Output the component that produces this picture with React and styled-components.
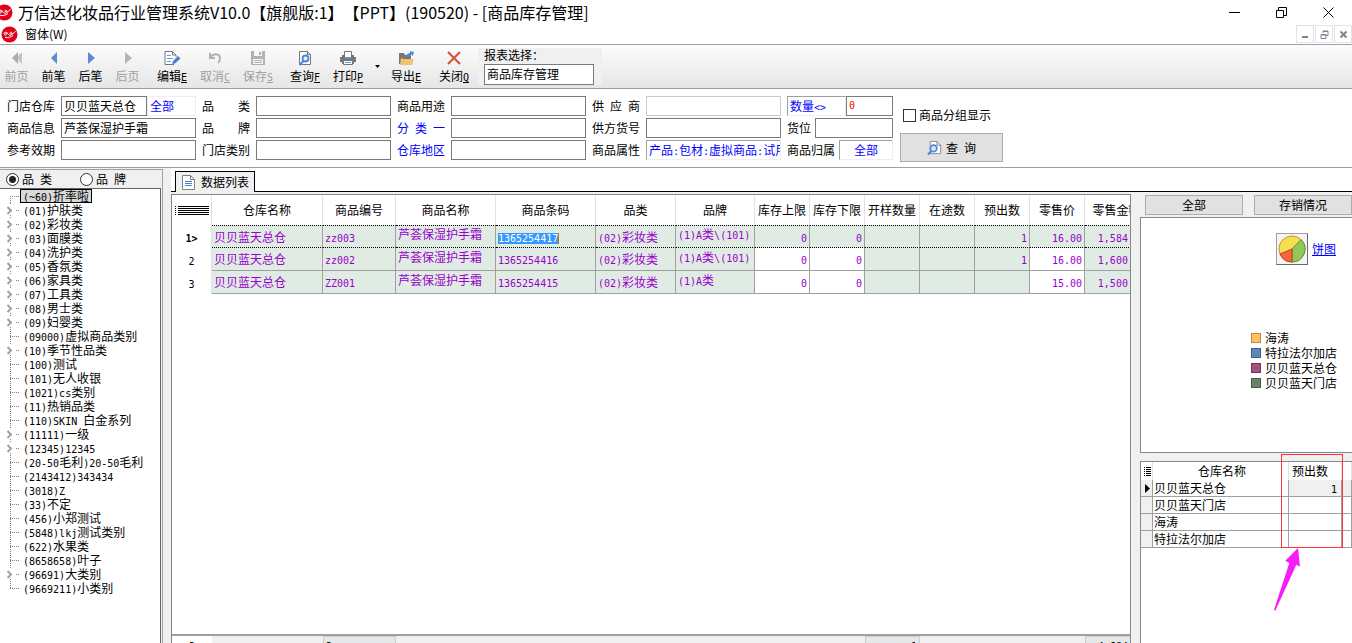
import React from 'react';
import styled, { createGlobalStyle, css } from 'styled-components';

const treeItems = [
  { code: '(~60)', name: '折率啦', selected: true },
  { code: '(01)', name: '护肤类', open: true },
  { code: '(02)', name: '彩妆类', open: true },
  { code: '(03)', name: '面膜类', open: true },
  { code: '(04)', name: '洗护类', open: true },
  { code: '(05)', name: '香氛类', open: true },
  { code: '(06)', name: '家具类', open: true },
  { code: '(07)', name: '工具类', open: true },
  { code: '(08)', name: '男士类', open: true },
  { code: '(09)', name: '妇婴类', open: true },
  { code: '(09000)', name: '虚拟商品类别' },
  { code: '(10)', name: '季节性品类', open: true },
  { code: '(100)', name: '测试' },
  { code: '(101)', name: '无人收银' },
  { code: '(1021)', name: 'cs类别' },
  { code: '(11)', name: '热销品类' },
  { code: '(110)', name: 'SKIN 白金系列' },
  { code: '(11111)', name: '一级', open: true },
  { code: '(12345)', name: '12345', open: true },
  { code: '(20-50毛利)', name: '20-50毛利' },
  { code: '(2143412)', name: '343434' },
  { code: '(3018)', name: 'Z' },
  { code: '(33)', name: '不定' },
  { code: '(456)', name: '小郑测试' },
  { code: '(5848)', name: 'lkj测试类别' },
  { code: '(622)', name: '水果类' },
  { code: '(8658658)', name: '叶子' },
  { code: '(96691)', name: '大类别', open: true },
  { code: '(9669211)', name: '小类别' },
];

const columns = [
  { key: 'store', title: '仓库名称', width: 111 },
  { key: 'no', title: '商品编号', width: 73 },
  { key: 'name', title: '商品名称', width: 100, top: true },
  { key: 'barcode', title: '商品条码', width: 100 },
  { key: 'type', title: '品类', width: 80 },
  { key: 'brand', title: '品牌', width: 79, top: true },
  { key: 'max', title: '库存上限', width: 55, num: true, editable: true },
  { key: 'min', title: '库存下限', width: 55, num: true, editable: true },
  { key: 'sample', title: '开样数量', width: 55, num: true },
  { key: 'transit', title: '在途数', width: 55, num: true },
  { key: 'out', title: '预出数', width: 55, num: true },
  { key: 'price', title: '零售价', width: 55, num: true, editable: true },
  { key: 'amount', title: '零售金额', width: 64, num: true },
];

const rows = [
  { store: '贝贝蓝天总仓', no: 'zz003', name: '芦荟保湿护手霜', barcode: '1365254417', type: '(02)彩妆类', brand: '(1)A类\\(101)', max: '0', min: '0', out: '1', price: '16.00', amount: '1,584.00' },
  { store: '贝贝蓝天总仓', no: 'zz002', name: '芦荟保湿护手霜', barcode: '1365254416', type: '(02)彩妆类', brand: '(1)A类\\(101)', max: '0', min: '0', out: '1', price: '16.00', amount: '1,600.00' },
  { store: '贝贝蓝天总仓', no: 'ZZ001', name: '芦荟保湿护手霜', barcode: '1365254415', type: '(02)彩妆类', brand: '(1)A类', max: '0', min: '0', price: '15.00', amount: '1,500.00' },
];

const totals = { no: '3', sample: '1', amount: '4,684.00' };

const legend = [
  { name: '海涛', color: '#ffc061', line: '#c08a3a' },
  { name: '特拉法尔加店', color: '#5f86b8', line: '#3a5f94' },
  { name: '贝贝蓝天总仓', color: '#a4557c', line: '#7b3459' },
  { name: '贝贝蓝天门店', color: '#6c7f68', line: '#4b5c48' },
];

const stores = [
  { name: '贝贝蓝天总仓', count: '1' },
  { name: '贝贝蓝天门店', count: '' },
  { name: '海涛', count: '' },
  { name: '特拉法尔加店', count: '' },
];

// half-width characters take exactly half of a Chinese one
const Mixed = ({ children }) =>
  String(children)
    .split(/([\x20-\x7e]+)/)
    .filter(Boolean)
    .map((part, i) => (/^[\x20-\x7e]/.test(part) ? <Half key={i}>{part}</Half> : part));

const Logo = () => (
  <svg width='17' height='17' viewBox='0 0 17 17' aria-hidden='true'>
    <circle cx='8.5' cy='8.5' r='8' fill='#e0001b' />
    <path d='M2.500 7.500C4 5.500 6 6 6 7.500S3.500 9.800 3.500 8.300s3-2 4 0 3.500 1.200 3.500-.8-2.500-1.500-2 0 4 .3 5.500-2.300M4 11.300c3 .6 6 0 8-1.800' stroke='#fff' strokeWidth='1' fill='none' />
  </svg>
);

const icons = {
  first: (
    <g>
      <path d='M13 2v12L7 8z' fill='#c4c4c4' />
      <path d='M9 2v12L3 8z' fill='#adadad' />
    </g>
  ),
  prev: <path d='M11 2v12L5 8z' fill='#5b8bd8' />,
  next: <path d='M5 2v12l7-6z' fill='#5b8bd8' />,
  last: <path d='M5 2v12l7-6z' fill='#b4b4b4' />,
  edit: (
    <g>
      <path d='M10 14.500H1V1.500h7.500L12 5v2' stroke='#777' fill='#fff' />
      <path d='M8.500 1.500V5H12' stroke='#777' fill='none' />
      <path d='M3 5.500h4M3 8.500h6M3 11.500h4' stroke='#59a0e8' />
      <path d='m8 14 1-3 5-5 2.500 2.500-5.500 5z' fill='#4a7fd0' />
    </g>
  ),
  undo: <path d='M3 3v5h5M3.500 7.500C6 3 13 3 13 8.500c0 2-1 3.500-2 4.500' stroke='#b2b2b2' strokeWidth='2' fill='none' />,
  save: (
    <g fill='#b2b2b2'>
      <path d='M1 1h14v14H1z' />
      <path d='M4 1h8v5H4zM3 9h10v5H3z' fill='#f6f6f6' />
      <path d='M9 2h2v3H9zM4 10h8v1H4zM4 12h8v1H4z' />
    </g>
  ),
  search: (
    <g>
      <path d='M2.500 14.500v-13h8l3 3v10z' stroke='#777' fill='#fff' />
      <path d='M10.500 1.500v3h3' stroke='#777' fill='none' />
      <circle cx='8.500' cy='8.500' r='3' stroke='#4a86d8' strokeWidth='1.800' fill='#e4f0ff' />
      <path d='m6.500 11-4 4' stroke='#4a86d8' strokeWidth='2.200' />
    </g>
  ),
  query: (
    <g>
      <path d='M3.500 14.500v-13h7l4 4v9z' stroke='#888' fill='#fff' />
      <path d='M10.500 1.500v4h4' stroke='#888' fill='none' />
      <circle cx='7' cy='9' r='3.500' stroke='#4a86d8' strokeWidth='1.800' fill='#d6e8ff' />
      <path d='m4.500 12-3.500 3.500' stroke='#4a86d8' strokeWidth='2.200' />
    </g>
  ),
  print: (
    <g>
      <path d='M4.500 7V1.500h7V7' stroke='#777' fill='#fff' />
      <path d='M0 7h2V5h2v2h8V5h2v2h2v5h-2v2H2v-2H0z' fill='#777' />
      <path d='M3.500 10.500h9v4h-9z' stroke='#777' fill='#fff' />
      <path d='M5 7h6v1.500H5zM5 12h6v1H5z' fill='#59a0e8' />
    </g>
  ),
  exportFile: (
    <g>
      <path d='M1 3h5l1 2h6v9H1z' fill='#777' />
      <path d='m3 8-1 7h12l2-6H5z' fill='#edc374' />
      <path d='M8 7c0-3 2-4 4-4V1l4 1-1 4-1.500-1.200C12 5 11 6 8 7z' fill='#4a90e0' />
    </g>
  ),
  close: <path d='m2 2 12 12M14 2 2 14' stroke='#d0583c' strokeWidth='2.200' />,
};

const Icon = ({ name, size = 16 }) => (
  <svg width={size} height={size} viewBox='0 0 16 16' fill='none' aria-hidden='true'>
    {icons[name]}
  </svg>
);

const PageIcon = () => (
  <svg width='13' height='15' viewBox='0 0 13 15' fill='none' aria-hidden='true'>
    <path d='M.5.5h8l4 4v10H.5z' fill='#fff' stroke='#808080' />
    <path d='M8.500.5v4h4' stroke='#808080' />
    <path d='M3 6.500h7M3 8.500h7M3 10.500h7' stroke='#4a86d8' />
  </svg>
);

const PieIcon = () => (
  <svg width='28' height='28' viewBox='0 0 28 28' aria-hidden='true'>
    <circle cx='14' cy='14' r='13' fill='#f5df51' stroke='#c9952b' />
    <path d='M14 14 23 4.600A13 13 0 0 1 14 27z' fill='#92c658' stroke='#5c9636' />
    <path d='M14 14v13A13 13 0 0 1 2 19z' fill='#f0693a' stroke='#cb3b1c' />
  </svg>
);

const Guide = ({ open, first, last }) => (
  <svg width='20' height='14' viewBox='0 0 20 14' fill='none' aria-hidden='true'>
    <path d={first ? 'M10.500 7v7' : last ? 'M10.500 0v8' : 'M10.500 0v14'} stroke='#808080' strokeDasharray='1 1' />
    <path d='M10 7.500h10' stroke='#808080' strokeDasharray='1 1' />
    {open && (
      <g>
        <path d='M6 2h10v10H6z' fill='#fff' />
        <path d='m7.500 4 3.500 3.500L7.500 11' stroke='#a0a0a0' strokeWidth='2' />
      </g>
    )}
  </svg>
);

const Tool = ({ icon, text, hotkey, disabled }) => (
  <ToolButton disabled={disabled} $wide={hotkey}>
    <Icon name={icon} />
    <span>
      {text}
      {hotkey && <Hotkey>{hotkey}</Hotkey>}
    </span>
  </ToolButton>
);

const Field = ({ id, label, link, light, value = '' }) => (
  <>
    <FieldLabel htmlFor={id} $link={link}>{label}</FieldLabel>
    <TextBox id={id} defaultValue={value} $light={light} />
  </>
);

const App = () => {
  return (
    <Window>
      <GlobalStyle />
      <TitleBar>
        <TitleLogo><Logo /></TitleLogo>
        <Title>万信达化妆品行业管理系统V10.0【旗舰版:1】【PPT】(190520) - [商品库存管理]</Title>
        <WindowButton aria-label='最小化'>
          <svg width='11' height='11'><path d='M0 5.500h11' stroke='#000' /></svg>
        </WindowButton>
        <WindowButton aria-label='还原'>
          <svg width='11' height='11' fill='none' stroke='#000'><path d='M.5 3.500h7v7h-7zM2.500 3V.5h8v8H8' /></svg>
        </WindowButton>
        <WindowButton aria-label='关闭'>
          <svg width='11' height='11' stroke='#000'><path d='m.5.5 10 10M10.500.5l-10 10' /></svg>
        </WindowButton>
      </TitleBar>
      <MenuBar>
        <Logo />
        <MenuItem>窗体(W)</MenuItem>
        <ChildButton aria-label='最小化窗体'>
          <svg width='9' height='9'><path d='M1 7h6' stroke='#748596' strokeWidth='2' /></svg>
        </ChildButton>
        <ChildButton aria-label='还原窗体'>
          <svg width='9' height='9' fill='none' stroke='#748596'><path d='M1 4.500h5v4H1zM1 5h5M3 3V1h5v4.500H6M3 1.500h5' /></svg>
        </ChildButton>
        <ChildButton aria-label='关闭窗体'>
          <svg width='9' height='9' stroke='#748596' strokeWidth='2'><path d='m1.500 1.500 6 6M7.500 1.500l-6 6' /></svg>
        </ChildButton>
      </MenuBar>

      <Toolbar>
        <ToolGroup $gap={12}>
          <Tool icon='first' text='前页' disabled />
          <Tool icon='prev' text='前笔' />
          <Tool icon='next' text='后笔' />
          <Tool icon='last' text='后页' disabled />
        </ToolGroup>
        <ToolGroup $gap={13}>
          <Tool icon='edit' text='编辑' hotkey='E' />
          <Tool icon='undo' text='取消' hotkey='C' disabled />
          <Tool icon='save' text='保存' hotkey='S' disabled />
        </ToolGroup>
        <PrintGroup>
          <Tool icon='search' text='查询' hotkey='F' />
          <Tool icon='print' text='打印' hotkey='P' />
        </PrintGroup>
        <DropButton aria-label='打印选项'>
          <svg width='5' height='3'><path d='M0 0h5L2.500 3z' /></svg>
        </DropButton>
        <ToolGroup $gap={18}>
          <Tool icon='exportFile' text='导出' hotkey='E' />
          <Tool icon='close' text='关闭' hotkey='Q' />
        </ToolGroup>
        <Report>
          <label htmlFor='report'>报表选择：</label>
          <TextBox id='report' defaultValue='商品库存管理' />
        </Report>
      </Toolbar>

      <Filters>
        <FilterGrid>
          <FieldLabel htmlFor='store'>门店仓库</FieldLabel>
          <Pair>
            <TextBox id='store' defaultValue='贝贝蓝天总仓' />
            <StoreAll>全部</StoreAll>
          </Pair>
          <Field id='type' label='品 类' />
          <Field id='usage' label='商品用途' />
          <Field id='supplier' label='供 应 商' light />
          <Pair>
            <QtyPick>数量<Half>&lt;&gt;</Half></QtyPick>
            <RedBox aria-label='数量' defaultValue='0' />
          </Pair>

          <Field id='info' label='商品信息' value='芦荟保湿护手霜' />
          <Field id='brand' label='品 牌' />
          <Field id='class1' label='分 类 一' link />
          <Field id='supplierNo' label='供方货号' />
          <Pair $gap={4}>
            <label htmlFor='slot'>货位</label>
            <TextBox id='slot' />
          </Pair>

          <Field id='expiry' label='参考效期' />
          <Field id='storeType' label='门店类别' />
          <Field id='area' label='仓库地区' link />
          <FieldLabel as='span'>商品属性</FieldLabel>
          <Pick><Mixed>产品:包材:虚拟商品:试用</Mixed></Pick>
          <Pair $gap={4}>
            <span>商品归属</span>
            <OwnerPick>全部</OwnerPick>
          </Pair>
        </FilterGrid>
        <FilterActions>
          <CheckLabel>
            <CheckBox type='checkbox' />
            商品分组显示
          </CheckLabel>
          <QueryButton>
            <Icon name='query' size={15} />
            <Spread>查 询</Spread>
          </QueryButton>
        </FilterActions>
      </Filters>

      <Workspace>
        <Sidebar>
          <RadioRow>
            <RadioLabel><Radio type='radio' name='group' defaultChecked /><Spread>品 类</Spread></RadioLabel>
            <RadioLabel><Radio type='radio' name='group' /><Spread>品 牌</Spread></RadioLabel>
          </RadioRow>
          <Tree>
            {treeItems.map((item, i) => (
              <TreeItem key={item.code}>
                <Guide open={item.open} first={i === 0} last={i === treeItems.length - 1} />
                <TreeText $selected={item.selected}><Mixed>{item.code + item.name}</Mixed></TreeText>
              </TreeItem>
            ))}
          </Tree>
        </Sidebar>

        <Content>
          <TabStrip>
            <Tab><PageIcon />数据列表</Tab>
          </TabStrip>
          <Panels>
            <GridPanel>
              <GridBody>
                <StockTable>
                  <colgroup>
                    <col width='40' />
                    {columns.map((col) => <col key={col.key} width={col.width} />)}
                  </colgroup>
                  <thead>
                    <tr>
                      <Th>
                        <svg width='34' height='9' aria-hidden='true'>
                          <path d='M0 .5h1M3 .5h31M0 2.500h1M3 2.500h31M0 4.500h1M3 4.500h31M0 6.500h1M3 6.500h31M0 8.500h1M3 8.500h31' stroke='#000' />
                        </svg>
                      </Th>
                      {columns.map((col) => <Th key={col.key}>{col.title}</Th>)}
                    </tr>
                  </thead>
                  <tbody>
                    {rows.map((row, i) => (
                      <tr key={row.no}>
                        <RowNo $current={i === 0}><Half>{i === 0 ? '1>' : i + 1}</Half></RowNo>
                        {columns.map((col) => (
                          <Td key={col.key} $num={col.num} $top={col.top} $current={i === 0} $plain={col.editable && i > 0}>
                            {i === 0 && col.key === 'barcode'
                              ? <Selected>{row.barcode}</Selected>
                              : <Mixed>{row[col.key] || ''}</Mixed>}
                          </Td>
                        ))}
                      </tr>
                    ))}
                  </tbody>
                </StockTable>
              </GridBody>
              <GridFooter>
                <FootCell $width={40} $count><Half>3</Half></FootCell>
                {columns.map((col) => (
                  <FootCell key={col.key} $width={col.width} $num={col.num} $filled={totals[col.key]}>
                    <Half>{totals[col.key]}</Half>
                  </FootCell>
                ))}
              </GridFooter>
            </GridPanel>

            <SidePanel>
              <SideButtons>
                <SideButton>全部</SideButton>
                <SideButton>存销情况</SideButton>
              </SideButtons>
              <ChartBox>
                <PieRow>
                  <PieButton aria-label='饼图'><PieIcon /></PieButton>
                  <a href='#pie'>饼图</a>
                </PieRow>
                <Legend>
                  {legend.map((item) => (
                    <LegendItem key={item.name}>
                      <Swatch $color={item.color} $line={item.line} />
                      {item.name}
                    </LegendItem>
                  ))}
                </Legend>
              </ChartBox>
              <StorePanel>
                <StoreTable>
                  <colgroup>
                    <col width='12' />
                    <col width='136' />
                    <col width='53' />
                    <col />
                  </colgroup>
                  <thead>
                    <tr>
                      <StoreTh>
                        <svg width='7' height='9' aria-hidden='true'>
                          <path d='M0 .5h1M2 .5h5M0 2.500h1M2 2.500h5M0 4.500h1M2 4.500h5M0 6.500h1M2 6.500h5M0 8.500h1M2 8.500h5' stroke='#000' />
                        </svg>
                      </StoreTh>
                      <StoreTh>仓库名称</StoreTh>
                      <StoreTh $left>预出数</StoreTh>
                      <StoreTh />
                    </tr>
                  </thead>
                  <tbody>
                    {stores.map((store, i) => (
                      <tr key={store.name}>
                        <StoreTd $gray $mark>
                          {i === 0 && <svg width='6' height='9' aria-hidden='true'><path d='M0 0v9l5-4.500z' /></svg>}
                        </StoreTd>
                        <StoreTd>{store.name}</StoreTd>
                        <StoreTd $num $gray={i === 0}><Half>{store.count}</Half></StoreTd>
                        <StoreTd $gray={i === 0} />
                      </tr>
                    ))}
                  </tbody>
                </StoreTable>
                <Highlight />
                <Arrow width='28' height='65' viewBox='0 0 28 65' aria-hidden='true'>
                  <path d='M25 1 27 19.700l-3.700-2L2.300 63.700 1 63l15.300-47-4-2.300z' fill='#f81cf8' />
                </Arrow>
              </StorePanel>
            </SidePanel>
          </Panels>
        </Content>
      </Workspace>
    </Window>
  );
};

export default App;

const GlobalStyle = createGlobalStyle`
  * {
    box-sizing: border-box;
  }
  body {
    margin: 0;
    background: #fff;
    color: #000;
    font-family: "Noto Sans CJK SC", sans-serif;
    font-size: 12px;
    line-height: 14px;
  }
  button, input {
    font: inherit;
    color: inherit;
    margin: 0;
    padding: 0;
    border-radius: 0;
  }
  button {
    border: 0;
    background: none;
  }
  svg {
    display: block;
    flex: none;
  }
  a {
    color: #0000ff;
  }
`;

const Half = styled.span`
  font-family: "DejaVu Sans Mono", monospace;
  font-size: 10px;
  line-height: 10px;
  white-space: pre;
`;

const Spread = styled.span`
  width: 30px;
  text-align-last: justify;
`;

const Window = styled.div`
  display: flex;
  flex-direction: column;
  height: 100vh;
  overflow: hidden;
`;

const TitleBar = styled.header`
  display: flex;
  align-items: center;
  flex: none;
  height: 24px;
`;

const TitleLogo = styled.span`
  width: 18px;
  display: flex;
  justify-content: flex-end;
  padding-right: 5px;
`;

const Title = styled.h1`
  flex: 1;
  margin: 0;
  font-size: 16px;
  line-height: 24px;
  font-weight: 400;
  text-spacing-trim: space-all;
  white-space: nowrap;
`;

const WindowButton = styled.button`
  display: flex;
  justify-content: center;
  width: 47px;
`;

const MenuBar = styled.nav`
  display: flex;
  align-items: center;
  gap: 1px;
  flex: none;
  height: 21px;
  padding-left: 1px;
  border-bottom: 1px solid #a0a0a0;
`;

const MenuItem = styled.button`
  margin-left: 6px;
  margin-right: auto;
`;

const ChildButton = styled.button`
  display: flex;
  align-items: center;
  justify-content: center;
  width: 18px;
  height: 18px;
  border: 1px solid #e3e3e3;
`;

const Toolbar = styled.div`
  display: flex;
  flex: none;
  height: 44px;
  padding: 3px 4px;
  border-bottom: 1px solid #a0a0a0;
  background: linear-gradient(#fcfcfc, #e6e6e6);
`;

const ToolGroup = styled.div`
  display: flex;
  gap: ${({ $gap }) => $gap}px;
  margin-right: 17px;

  &:nth-last-child(2) {
    margin-right: 9px;
  }
`;

const PrintGroup = styled.div`
  display: flex;
  gap: 13px;
`;

const ToolButton = styled.button`
  display: flex;
  flex-direction: column;
  align-items: center;
  gap: 3px;
  width: ${({ $wide }) => ($wide ? 30 : 25)}px;
  padding-top: 2px;
  white-space: nowrap;

  &:disabled {
    color: #a0a0a0;
  }
`;

const Hotkey = styled(Half)`
  text-decoration: underline;
`;

const DropButton = styled.button`
  display: flex;
  align-items: center;
  justify-content: center;
  width: 28px;
`;

const Report = styled.div`
  display: flex;
  flex-direction: column;
  gap: 2px;
  width: 124px;
  padding: 0 8px 0 6px;
  background: #f0f0f0;
`;

const TextBox = styled.input`
  flex: 1 1 0;
  width: 100%;
  min-width: 0;
  height: 20px;
  min-height: 20px;
  padding: 0 2px 2px;
  border: 1px solid ${({ $light }) => ($light ? '#cccccc' : '#7a7a7a')};
  background: #fff;
  outline: 0;
`;

const RedBox = styled(TextBox)`
  font-family: "DejaVu Sans Mono", monospace;
  font-size: 10px;
  color: #ff0000;
`;

const Filters = styled.section`
  display: flex;
  flex: none;
  gap: 7px;
  height: 79px;
  padding: 7px 7px 0;
  border-bottom: 1px solid #a0a0a0;
`;

const FilterGrid = styled.div`
  display: grid;
  grid-template-columns: repeat(4, 48px 135px) 106px;
  grid-auto-rows: 20px;
  gap: 2px 6px;
  align-items: center;
`;

const FieldLabel = styled.label`
  text-align-last: justify;
  white-space: nowrap;
  color: ${({ $link }) => ($link ? '#0000ff' : 'inherit')};
`;

const Pair = styled.div`
  display: flex;
  align-items: center;
  gap: ${({ $gap }) => $gap || 0}px;
  white-space: nowrap;
`;

const Pick = styled.button`
  height: 20px;
  padding: 0 2px;
  overflow: hidden;
  border: 1px solid #eeeeee;
  border-top-color: #a0a0a0;
  border-left-color: #a0a0a0;
  color: #0000ff;
  text-align: left;
  white-space: nowrap;
`;

const StoreAll = styled(Pick)`
  width: 49px;
  border-color: #eeeeee;
`;

const QtyPick = styled(Pick)`
  width: 59px;
`;

const OwnerPick = styled(Pick)`
  flex: 1;
  text-align: center;
`;

const FilterActions = styled.div`
  display: flex;
  flex-direction: column;
  gap: 11px;
  padding-top: 12px;
`;

const CheckLabel = styled.label`
  display: flex;
  align-items: center;
  gap: 3px;
  padding-left: 3px;
`;

const CheckBox = styled.input`
  appearance: none;
  width: 13px;
  height: 13px;
  border: 1px solid #333333;
  background: #fff;
`;

const QueryButton = styled.button`
  display: flex;
  align-items: center;
  justify-content: center;
  gap: 4px;
  width: 103px;
  height: 29px;
  border: 1px solid #adadad;
  background: #e1e1e1;
`;

const Workspace = styled.main`
  display: flex;
  flex: 1;
  min-height: 0;
  background: #f0f0f0;
`;

const Sidebar = styled.aside`
  display: flex;
  flex-direction: column;
  flex: none;
  width: 163px;
  margin: 1px 8px 0 0;
  padding-right: 1px;
  border-top: 1px solid #a0a0a0;
  border-right: 1px solid #a0a0a0;
`;

const RadioRow = styled.div`
  display: flex;
  gap: 28px;
  height: 18px;
  padding-left: 6px;
`;

const RadioLabel = styled.label`
  display: flex;
  align-items: center;
  gap: 3px;
`;

const Radio = styled.input`
  appearance: none;
  width: 13px;
  height: 13px;
  border: 1px solid #333333;
  border-radius: 50%;
  background: #fff;

  &:checked {
    background: radial-gradient(#222222 0 3px, #ffffff 4px);
  }
`;

const Tree = styled.ul`
  flex: 1;
  margin: 0;
  padding: 0;
  border-top: 1px solid #646464;
  border-right: 1px solid #646464;
  background: #fff;
  list-style: none;
`;

const TreeItem = styled.li`
  display: flex;
  height: 14px;
`;

const TreeText = styled.span`
  padding: 0 3px;
  white-space: nowrap;
  ${({ $selected }) => $selected && css`
    padding: 0 2px;
    border: 1px solid #000;
    background: #d9d9d9;
    line-height: 12px;
  `}
`;

const Content = styled.div`
  display: flex;
  flex-direction: column;
  flex: 1;
  min-width: 0;
`;

const TabStrip = styled.div`
  display: flex;
  height: 24px;
  padding: 3px 0 0 4px;
  border-bottom: 1px solid #000;
  background: #fff;
`;

const Tab = styled.button`
  display: flex;
  align-items: center;
  gap: 6px;
  height: 21px;
  padding: 0 5px 0 6px;
  border: 1px solid #000;
  border-bottom: 0;
  background: #f0f0f0;
`;

const Panels = styled.div`
  display: flex;
  flex: 1;
  gap: 9px;
  min-height: 0;
  padding-top: 2px;
`;

const GridPanel = styled.section`
  display: flex;
  flex-direction: column;
  flex: 1;
  min-width: 0;
  overflow: hidden;
  border: 1px solid #828790;
  border-bottom: 0;
  background: #fff;
`;

const GridBody = styled.div`
  flex: 1;
  overflow: hidden;
`;

const StockTable = styled.table`
  width: 977px;
  table-layout: fixed;
  border-collapse: separate;
  border-spacing: 0;
`;

const Th = styled.th`
  height: 30px;
  padding: 0;
  border-right: 1px solid #e2e2e2;
  font-weight: 400;
  text-align: center;
  white-space: nowrap;

  svg {
    margin: 0 auto;
  }
`;

const RowNo = styled.td`
  padding: 0;
  border-right: 1px solid #e2e2e2;
  font-weight: ${({ $current }) => ($current ? 700 : 400)};
  text-align: center;
`;

const Td = styled.td`
  height: 23px;
  padding: ${({ $top }) => ($top ? '0 2px 5px' : '0 2px')};
  border-right: 1px solid #a0a0a0;
  border-bottom: 1px solid #a0a0a0;
  background: ${({ $plain }) => ($plain ? '#ffffff' : '#e0ece3')};
  color: #9900cc;
  text-align: ${({ $num }) => ($num ? 'right' : 'left')};
  white-space: nowrap;
  ${({ $current }) => $current && css`
    border-top: 1px dotted #000;
    border-bottom: 1px dotted #000;
  `}
`;

const Selected = styled(Half)`
  border-right: 1px solid #d06a10;
  background: #3399ff;
  color: #fff;
`;

const GridFooter = styled.div`
  display: flex;
  flex: none;
  height: 9px;
  overflow: hidden;
  border-top: 2px solid #a0a09e;
  background: #f0f0f0;
`;

const FootCell = styled.div`
  flex: none;
  width: ${({ $width }) => $width}px;
  height: 20px;
  padding: 1px 2px 0;
  text-align: ${({ $num, $count }) => ($count ? 'center' : $num ? 'right' : 'left')};
  background: ${({ $count, $filled }) => ($count ? '#ffffff' : $filled ? '#e4e8e8' : 'none')};
  border: 1px solid ${({ $filled }) => ($filled ? '#c8cece' : 'transparent')};
`;

const SidePanel = styled.aside`
  display: flex;
  flex-direction: column;
  flex: none;
  width: 212px;
`;

const SideButtons = styled.div`
  display: flex;
  gap: 11px;
  padding: 1px 0 2px 5px;
`;

const SideButton = styled.button`
  flex: 1;
  height: 20px;
  border: 1px solid #adadad;
  background: #e1e1e1;
`;

const ChartBox = styled.div`
  height: 236px;
  padding: 15px 0 0 110px;
  border: 1px solid #828790;
  border-right: 0;
  background: #fff;
`;

const PieRow = styled.div`
  display: flex;
  align-items: center;
  gap: 4px;
  padding-left: 25px;
`;

const PieButton = styled.button`
  display: flex;
  align-items: center;
  justify-content: center;
  width: 32px;
  height: 32px;
  border: 1px solid #a0a0a0;
  border-right-color: #696969;
  border-bottom-color: #696969;
  background: #f4f4f4;
`;

const Legend = styled.ul`
  margin: 65px 0 0;
  padding: 0;
  list-style: none;
`;

const LegendItem = styled.li`
  display: flex;
  align-items: center;
  gap: 4px;
  height: 15px;
`;

const Swatch = styled.span`
  width: 10px;
  height: 10px;
  border: 1px solid ${({ $line }) => $line};
  background: ${({ $color }) => $color};
`;

const StorePanel = styled.div`
  position: relative;
  flex: 1;
  margin-top: 8px;
  border-top: 1px solid #828790;
  border-left: 1px solid #828790;
  background: #fff;
`;

const StoreTable = styled.table`
  width: 100%;
  table-layout: fixed;
  border-collapse: separate;
  border-spacing: 0;
`;

const StoreTh = styled.th`
  height: 18px;
  padding: 0 0 0 3px;
  border-right: 1px solid #e2e2e2;
  font-weight: 400;
  text-align: ${({ $left }) => ($left ? 'left' : 'center')};
`;

const StoreTd = styled.td`
  height: 17px;
  padding: ${({ $mark }) => ($mark ? '0 0 0 4px' : '0 4px 0 1px')};
  border-right: 1px solid #a0a0a0;
  border-bottom: 1px solid #a0a0a0;
  background: ${({ $gray }) => ($gray ? '#f0f0f0' : '#ffffff')};
  text-align: ${({ $num }) => ($num ? 'right' : 'left')};
  white-space: nowrap;
`;

const Highlight = styled.div`
  position: absolute;
  top: -8px;
  left: 140px;
  width: 62px;
  height: 94px;
  border: 1px solid #ff3333;
`;

const Arrow = styled.svg`
  position: absolute;
  top: 85px;
  left: 132px;
`;
